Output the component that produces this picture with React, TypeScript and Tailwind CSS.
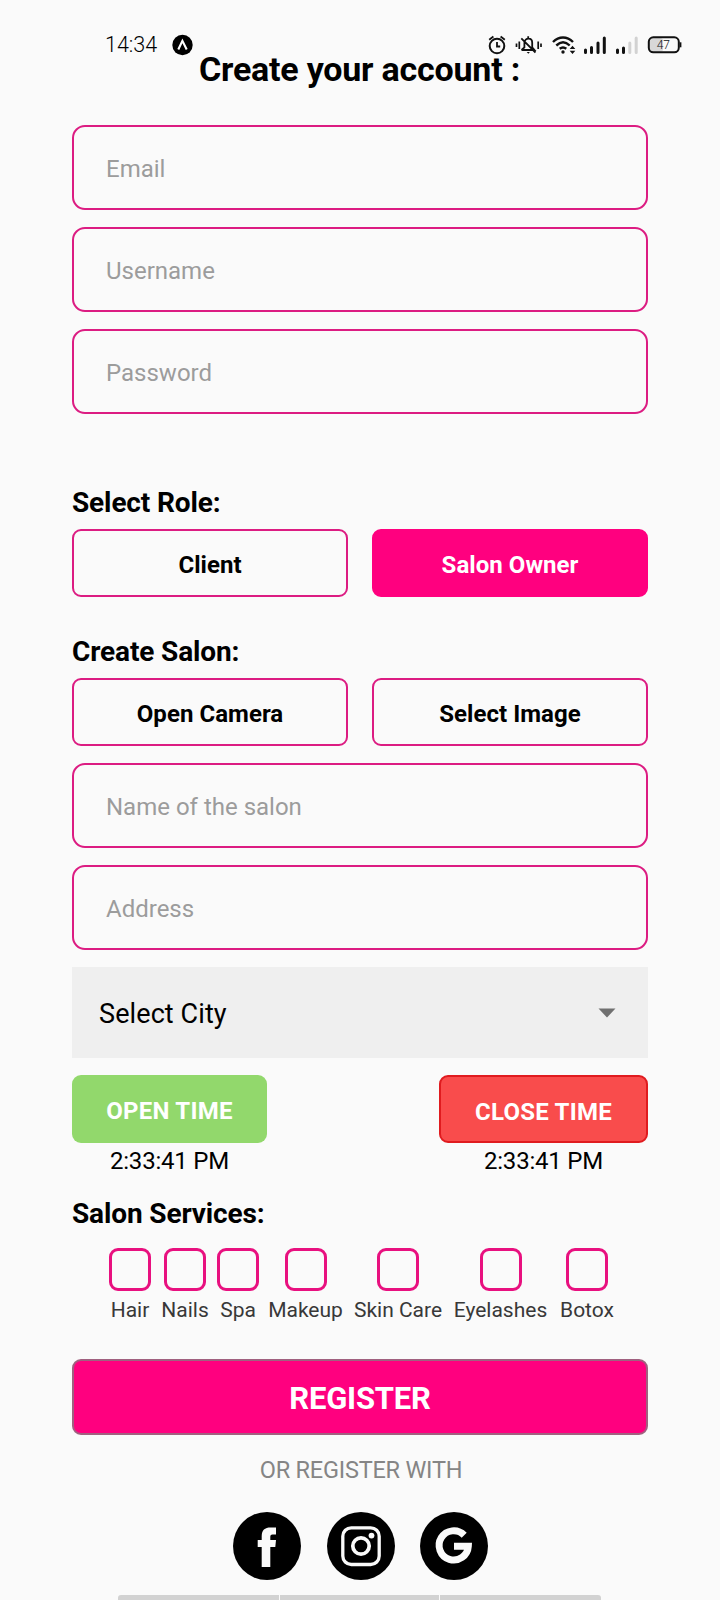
import React from "react";

function Field({ label }: { label: string }) {
  return (
    <div className="mb-[17px] flex h-[85px] items-center rounded-[13px] border-2 border-[#dc1c82] px-8 pt-[3px] text-[24px] leading-none text-[#9c9c9c]">
      {label}
    </div>
  );
}

function Choice({ label, active = false }: { label: string; active?: boolean }) {
  return (
    <button
      className={
        "flex h-[68px] w-[276px] items-center justify-center rounded-[9px] border-2 pt-[3px] text-[24px] font-bold leading-none tracking-[0.05px] " +
        (active ? "border-[#ff007f] bg-[#ff007f] text-white" : "border-[#dc1c82] text-black")
      }
    >
      {label}
    </button>
  );
}

function Heading({ label }: { label: string }) {
  return <h2 className="flex h-[54px] items-center text-[28px] font-bold leading-none tracking-[-0.13px]">{label}</h2>;
}

function Service({ label, className }: { label: string; className: string }) {
  return (
    <div className={"flex shrink-0 flex-col items-center " + className}>
      <div className="h-[43px] w-[42px] rounded-[9px] border-[3px] border-[#e8107f]" />
      <span className="mt-[7px] whitespace-nowrap text-[21px] leading-6 text-[#383838]">{label}</span>
    </div>
  );
}

function StatusBar() {
  return (
    <div className="flex h-[30px] items-center text-black">
      <span className="ml-[105px] w-[66px] whitespace-nowrap text-[21.5px] font-light leading-none">14:34</span>
      <svg className="block" width="22" height="22" viewBox="0 0 22 22">
        <circle cx="11.5" cy="11" r="10.2" fill="#000" />
        <path d="M7.3 15.5 11.4 6.8 15.7 15.5" fill="none" stroke="#fff" strokeWidth="2.1" />
      </svg>
      <svg className="ml-[287px] block" width="206" height="30" viewBox="0 0 206 30" fill="none" stroke="#111" strokeWidth="2">
        <circle cx="17" cy="16" r="7.3" />
        <path d="M17 12v4.5h3.2M9.2 9.7l4.2-3.2M20.6 6.5l4.2 3.2" strokeWidth="1.8" />
        <path d="M36.5 13.5v3.5M39.3 11.5v7.5M61 13.5v3.5M58.2 11.5v7.5" strokeWidth="1.7" />
        <path d="M41.5 20h13l-2.3-2.7v-4.6c0-5.4-7-5.4-7.8 0v4.6L41.5 20M41.3 8.3 55.5 22.5M48.2 6.3v2" strokeWidth="1.8" />
        <path d="M46.7 22h3.2l-1.6 1.8z" fill="#111" stroke="none" />
        <path d="M73 12c6-6 14-6 20 0M76.3 15.5c4.3-4 9.2-4 13.4 0M79.7 18.8c2.3-1.8 4.3-1.8 6.6 0" strokeWidth="2.4" />
        <circle cx="83" cy="22" r="1.7" fill="#111" stroke="none" />
        <path d="m89.7 19 2.8-3.3 2.8 3.3zM89.7 20.8l2.8 3.3 2.8-3.3z" fill="#111" stroke="none" />
        <path d="M105.5 20v2.5M111.5 17.5v5M118 13v9.5M124.3 8v14.5" strokeWidth="3" strokeLinecap="round" />
        <path d="M137.5 20v2.5M143.5 18v4.5" strokeWidth="3" strokeLinecap="round" />
        <path d="M149.8 13v9.5M156.2 8v14.5" stroke="#d2d2d2" strokeWidth="3" strokeLinecap="round" />
        <rect x="169" y="8" width="14" height="14" rx="3" fill="#d8d8d8" stroke="none" />
        <rect x="168.8" y="7.3" width="30" height="15" rx="4.5" />
        <path d="M200.5 12.3v5" strokeWidth="1.8" />
        <text x="183.3" y="18.8" textAnchor="middle" fontSize="12" fontWeight="300" fontFamily="Roboto, sans-serif" fill="#111" stroke="none">47</text>
      </svg>
    </div>
  );
}

export default function App() {
  return (
    <div className="h-[1600px] w-[720px] overflow-hidden bg-[#fafafa] pt-[30px] font-[Roboto,sans-serif] text-black">
      <StatusBar />
      <h1 className="-mt-[10px] flex h-[75px] items-start justify-center whitespace-nowrap pr-[1px] text-[34px] font-bold leading-[38px] tracking-[-0.22px]">
        Create your account :
      </h1>
      <main className="mx-auto w-[576px]">
        <Field label="Email" />
        <Field label="Username" />
        <Field label="Password" />
        <div className="h-[45px]" />
        <Heading label="Select Role:" />
        <div className="-mt-[1px] flex justify-between">
          <Choice label="Client" />
          <Choice label="Salon Owner" active />
        </div>
        <div className="h-[28px]" />
        <Heading label="Create Salon:" />
        <div className="-mt-[1px] mb-[17px] flex justify-between">
          <Choice label="Open Camera" />
          <Choice label="Select Image" />
        </div>
        <Field label="Name of the salon" />
        <Field label="Address" />
        <div className="flex h-[91px] items-center justify-between bg-[#efefef] pl-[27px] pr-8 text-[27px] leading-none tracking-[0.1px]">
          <span className="pt-[4px]">Select City</span>
          <svg width="18" height="10" viewBox="0 0 18 10" className="mt-px">
            <path d="M.5.5h17L9 9.5z" fill="#707070" />
          </svg>
        </div>
        <div className="mt-[17px] flex justify-between">
          <div className="w-[195px] text-center">
            <div className="flex h-[68px] items-center justify-center rounded-[9px] bg-[#92d86c] pt-[3px] text-[24px] font-bold leading-none tracking-[0.25px] text-white">OPEN TIME</div>
            <p className="text-[24px] leading-9 tracking-[-0.2px]">2:33:41 PM</p>
          </div>
          <div className="w-[209px] text-center">
            <div className="flex h-[68px] items-center justify-center rounded-[9px] border-2 border-[#e01b1f] bg-[#f94c4c] pt-[5px] text-[24px] font-bold leading-none tracking-[0.25px] text-white">CLOSE TIME</div>
            <p className="text-[24px] leading-9 tracking-[-0.2px]">2:33:41 PM</p>
          </div>
        </div>
        <div className="h-[8px]" />
        <Heading label="Salon Services:" />
        <div className="mt-[7px] flex pl-[37px]">
          <Service label="Hair" className="w-[42px]" />
          <Service label="Nails" className="ml-[10px] w-[48px]" />
          <Service label="Spa" className="ml-[8px] w-[42px]" />
          <Service label="Makeup" className="ml-[9px] w-[75px]" />
          <Service label="Skin Care" className="ml-[10px] w-[90px]" />
          <Service label="Eyelashes" className="ml-[10px] w-[95px]" />
          <Service label="Botox" className="ml-[10px] w-[58px]" />
        </div>
        <button className="mt-[37px] flex h-[76px] w-full items-center justify-center rounded-[9px] border-2 border-[#a0607f] bg-[#ff007f] pt-[3px] text-[31px] font-bold leading-none tracking-[-0.2px] text-white">
          REGISTER
        </button>
        <p className="mt-[17px] h-[60px] pl-[2px] text-center text-[23.5px] leading-9 tracking-[-0.22px] text-[#858585]">OR REGISTER WITH</p>
        <div className="flex pl-[161px]">
          <svg width="68" height="68" viewBox="0 0 68 68">
            <circle cx="34" cy="34" r="34" />
            <path d="M28.7 55V35h-4v-7h4v-4c0-6 3-8.6 9-8.6H43V22.5h-3.5c-1.8 0-2.2 1-2.2 2.8V28H43l-.7 7h-5v20z" fill="#fafafa" />
          </svg>
          <svg className="ml-[26px]" width="68" height="68" viewBox="0 0 68 68">
            <circle cx="34" cy="34" r="34" />
            <rect x="15.8" y="15.8" width="36.4" height="36.7" rx="8.5" fill="none" stroke="#fafafa" strokeWidth="3.3" />
            <circle cx="34" cy="34" r="8.2" fill="none" stroke="#fafafa" strokeWidth="3.7" />
            <circle cx="44.5" cy="23.6" r="2.9" fill="#fafafa" />
          </svg>
          <svg className="ml-[25px]" width="68" height="68" viewBox="0 0 68 68">
            <circle cx="34" cy="34" r="34" />
            <path d="M44.2 23.2A14.6 14.6 0 1 0 48.3 34.2H34" fill="none" stroke="#fafafa" strokeWidth="7" />
          </svg>
        </div>
      </main>
      <div className="ml-[118px] mt-[15px] flex h-[5px] w-[483px] gap-px overflow-hidden rounded-t-[3px]">
        <div className="w-[161px] bg-[#d2d2d2]" />
        <div className="w-[159px] bg-[#d2d2d2]" />
        <div className="flex-1 bg-[#d2d2d2]" />
      </div>
    </div>
  );
}
